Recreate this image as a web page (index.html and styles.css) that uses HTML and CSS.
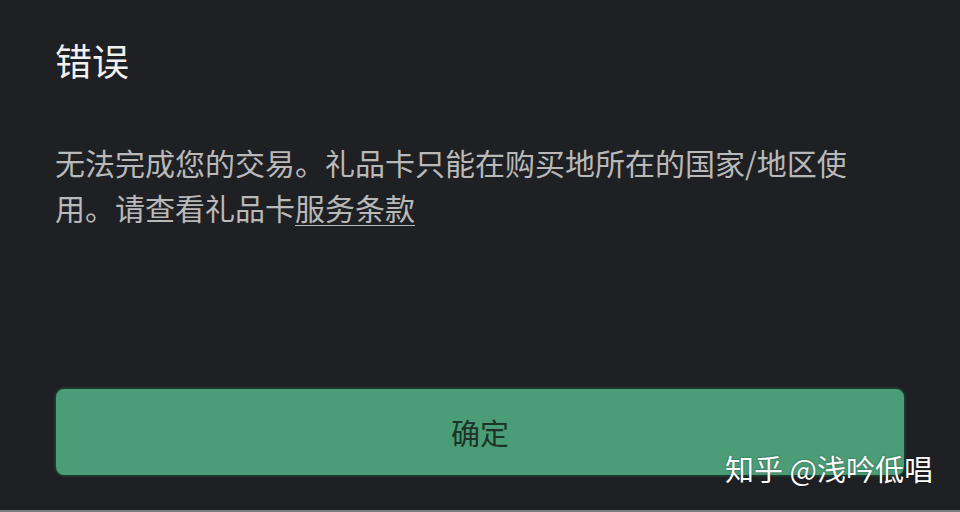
FILE: index.html
```html
<!DOCTYPE html>
<html lang="zh-CN">
<head>
  <meta charset="UTF-8" />
  <meta name="viewport" content="width=device-width, initial-scale=1.0"/>
  <title>错误</title>
  <link rel="stylesheet" href="styles.css">
</head>
<body>
  <div class="dialog">
    <h1 class="dialog-title">错误</h1>
    <p class="dialog-text">无法完成您的交易。礼品卡只能在购买地所在的国家/地区使用。请查看礼品卡<a href="#" class="terms">服务条款</a></p>
    <button class="ok-btn">确定</button>
  </div>
  <div class="watermark">知乎 @浅吟低唱</div>
</body>
</html>
```

FILE: styles.css
```css
html, body {
  margin: 0;
  height: 100%;
}
body {
  font-family: "Noto Sans CJK SC", "Noto Sans", sans-serif;
  background: #1f2024;
  color: #b9b9b9;
  position: relative;
  overflow: hidden;
  border-bottom: 2px solid #7d7e80;
  box-sizing: border-box;
}
.dialog {
  padding: 38px 54px 0 55px;
}
.dialog-title {
  margin: 0;
  font-size: 37px;
  line-height: 44px;
  font-weight: 400;
  color: #f1f1f1;
}
.dialog-text {
  margin: 58px 0 0;
  font-size: 30px;
  line-height: 45px;
  width: 820px;
}
.terms {
  color: inherit;
  text-decoration: underline;
  text-underline-offset: 5px;
  text-decoration-thickness: 1px;
}
.ok-btn {
  display: block;
  width: 852px;
  height: 90px;
  margin: 157px 0 0 -1px;
  background: #4b9d78;
  border: 2px solid #1b3a2c;
  border-radius: 10px;
  font-family: inherit;
  font-size: 29px;
  color: #1d3327;
  cursor: pointer;
}
.watermark {
  position: absolute;
  left: 725px;
  top: 448px;
  font-size: 29px;
  line-height: 40px;
  color: #ffffff;
  text-shadow: 0 0 2px rgba(0,0,0,0.5);
}
```
